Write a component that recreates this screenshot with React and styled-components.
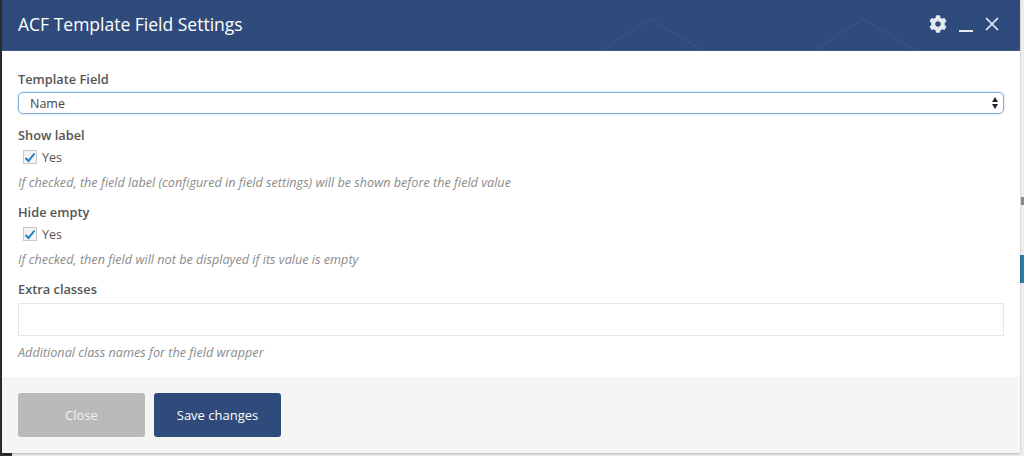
import React from "react";
import styled, { createGlobalStyle } from "styled-components";
import { FaCog } from "react-icons/fa";

const Global = createGlobalStyle`
  html, body { margin: 0; padding: 0; width: 1024px; height: 456px; overflow: hidden; background: #e9e9ea; }
  * { box-sizing: border-box; }
`;
const Page = styled.div`
  position: relative; width: 1024px; height: 456px; overflow: hidden;
  background: linear-gradient(90deg, #2b2d30 0 2px, #eeeeee 2px);
  font-family: "Open Sans", "Liberation Sans", sans-serif;
`;
const BackdropChip = styled.div`
  position: absolute; right: 0; top: 255px; width: 4px; height: 28px; background: #2f79a8;
`;
const BackdropLetter = styled.div`
  position: absolute; right: 0; top: 197px; width: 3px; height: 8px; background: #8a8a8a;
`;
const BackdropCorner = styled.div`
  position: absolute; left: 0; bottom: 0; width: 12px; height: 3px; background: #2b2d30;
`;
const Modal = styled.div`
  position: relative; margin-left: 2px; width: 1018px; height: 453px; display: flex; flex-direction: column;
  background: #fff; box-shadow: 0 1px 2px rgba(0,0,0,.25);
`;
const Header = styled.header`
  position: relative; height: 51px; flex: none; background: #2f4b7c; display: flex; align-items: center;
  justify-content: space-between; padding: 0 21px 2px 16px; border-bottom: 1px solid #3d5a8c;
`;
const Pattern = styled.svg`
  position: absolute; left: 0; top: 0; width: 1018px; height: 50px; pointer-events: none;
`;
const Title = styled.h1`
  position: relative; margin: 0; font-size: 17.5px; font-weight: 400; color: #fff; line-height: 24px;
`;
const Controls = styled.div`
  position: relative; display: flex; align-items: center; gap: 12px;
`;
const Body = styled.main`
  flex: 1; padding: 20px 16px 0; display: flex; flex-direction: column;
`;
const Label = styled.div`
  font-size: 12.8px; font-weight: 600; line-height: 17px; color: #555;
`;
const SelectBox = styled.div`
  margin-top: 4px; height: 22px; border: 1px solid #7eaedb; border-radius: 5px; box-shadow: 0 0 2px #a5c8ea;
  display: flex; align-items: center; justify-content: space-between; padding: 0 5px 0 11px;
  font-size: 12.5px; color: #444;
`;
const Arrows = styled.svg`
  width: 6px; height: 12px; display: block;
`;
const CheckRow = styled.div`
  margin: 4px 0 0 5px; height: 18px; display: flex; align-items: center; gap: 5px; font-size: 12.5px; color: #555;
`;
const Box = styled.span`
  width: 14px; height: 14px; border: 1px solid #c9c9c9; background: #f4f4f4; display: flex;
  align-items: center; justify-content: center;
`;
const Help = styled.p`
  margin: ${p => p.$top}px 0 0; font-size: 12.65px; font-style: italic; line-height: 17px; color: #8b8b8b;
`;
const Section = styled.section`
  margin-top: ${p => p.$top}px;
`;
const TextInput = styled.div`
  margin-top: 5px; height: 33px; border: 1px solid #e6e6e6; background: #fff;
`;
const Footer = styled.footer`
  height: 76px; flex: none; background: #f5f5f5; display: flex; gap: 9px; padding: 16px 16px 0;
`;
const Btn = styled.button`
  width: 127px; height: 44px; border: 0; border-radius: 3px; font: 400 13px "Open Sans", sans-serif;
  color: ${p => p.$primary ? "#fff" : "#f2f2f2"}; background: ${p => p.$primary ? "#2f4b7c" : "#bababa"};
`;

const Check = () => (
  <Box>
    <svg width="12" height="11" viewBox="0 0 12 11"><path d="M1.5 6 L4.5 9 L10.5 1.5" fill="none" stroke="#1e80c4" strokeWidth="2" /></svg>
  </Box>
);

export default function App() {
  return (
    <Page>
      <Global />
      <BackdropLetter />
      <BackdropChip />
      <BackdropCorner />
      <Modal>
        <Header>
          <Pattern viewBox="0 0 1018 50">
            <path d="M600 50 L648 19 L700 50 M813 50 L861 19 L913 50" fill="none" stroke="#395484" strokeWidth="1.2" />
          </Pattern>
          <Title>ACF Template Field Settings</Title>
          <Controls>
            <FaCog size={18} color="#e6e9f0" />
            <svg width="14" height="18" viewBox="0 0 14 18"><rect x="0" y="15" width="14" height="2" fill="#e6e9f0" /></svg>
            <svg width="14" height="14" viewBox="0 0 14 14"><path d="M1 1 L13 13 M13 1 L1 13" stroke="#f2f4f8" strokeWidth="1.6" /></svg>
          </Controls>
        </Header>
        <Body>
          <Label>Template Field</Label>
          <SelectBox>
            Name
            <Arrows viewBox="0 0 6 12"><path d="M3 0 L6 5 H0 Z M3 12 L0 7 H6 Z" fill="#222" /></Arrows>
          </SelectBox>
          <Section $top={13}>
            <Label>Show label</Label>
            <CheckRow><Check />Yes</CheckRow>
            <Help $top={8}>If checked, the field label (configured in field settings) will be shown before the field value</Help>
          </Section>
          <Section $top={13}>
            <Label>Hide empty</Label>
            <CheckRow><Check />Yes</CheckRow>
            <Help $top={8}>If checked, then field will not be displayed if its value is empty</Help>
          </Section>
          <Section $top={13}>
            <Label>Extra classes</Label>
            <TextInput />
            <Help $top={8}>Additional class names for the field wrapper</Help>
          </Section>
        </Body>
        <Footer>
          <Btn>Close</Btn>
          <Btn $primary>Save changes</Btn>
        </Footer>
      </Modal>
    </Page>
  );
}
